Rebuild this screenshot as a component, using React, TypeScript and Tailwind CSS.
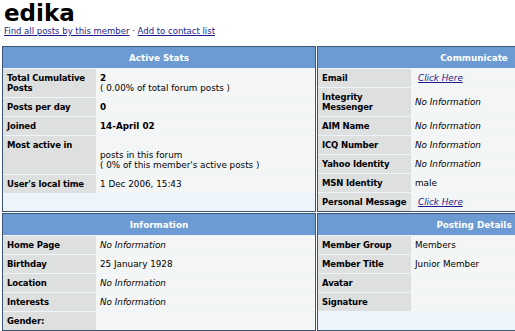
import React from "react";

type Row = { label: string[]; value: React.ReactNode };

const noInfo = <i>No Information</i>;
const clickHere = (
  <a href="#" className="ml-[3px] italic text-[#1c1c8c] underline">
    Click Here
  </a>
);

const activeStats: Row[] = [
  {
    label: ["Total Cumulative", "Posts"],
    value: (
      <>
        <b>2</b>
        <br />( 0.00% of total forum posts )
      </>
    ),
  },
  { label: ["Posts per day"], value: <b>0</b> },
  { label: ["Joined"], value: <b>14-April 02</b> },
  {
    label: ["Most active in"],
    value: (
      <>
        <br />
        posts in this forum
        <br />( 0% of this member's active posts )
      </>
    ),
  },
  { label: ["User's local time"], value: "1 Dec 2006, 15:43" },
];

const communicate: Row[] = [
  { label: ["Email"], value: clickHere },
  { label: ["Integrity", "Messenger"], value: noInfo },
  { label: ["AIM Name"], value: noInfo },
  { label: ["ICQ Number"], value: noInfo },
  { label: ["Yahoo Identity"], value: noInfo },
  { label: ["MSN Identity"], value: "male" },
  { label: ["Personal Message"], value: clickHere },
];

const information: Row[] = [
  { label: ["Home Page"], value: noInfo },
  { label: ["Birthday"], value: "25 January 1928" },
  { label: ["Location"], value: noInfo },
  { label: ["Interests"], value: noInfo },
  { label: ["Gender:"], value: "" },
];

const postingDetails: Row[] = [
  { label: ["Member Group"], value: "Members" },
  { label: ["Member Title"], value: "Junior Member" },
  { label: ["Avatar"], value: "" },
  { label: ["Signature"], value: "" },
];

function Box({ title, rows }: { title: string; rows: Row[] }) {
  return (
    <div className="flex w-[314px] flex-col border border-[#3d5574] bg-[#eef4fb]">
      <div className="flex h-[21px] items-center justify-center bg-[#6c9bd3] text-[8.8px] font-bold text-white">
        {title}
      </div>
      <div className="mt-px flex flex-col gap-px">
        {rows.map((r, i) => (
          <div key={i} className="flex">
            <div className="w-[93px] shrink-0 bg-[#dedfdf] px-[4px] py-[4px] text-[8.5px] font-bold tracking-[-0.15px] text-black">
              {r.label.map((l, j) => (
                <div key={j} className="whitespace-nowrap">
                  {l}
                </div>
              ))}
            </div>
            <div className="flex flex-1 items-center bg-[#f4f5f5] px-[4px] py-[4px] text-black">
              <div>{r.value}</div>
            </div>
          </div>
        ))}
      </div>
    </div>
  );
}

export default function App() {
  return (
    <div className="h-[331px] w-[515px] overflow-hidden bg-white font-['DejaVu_Sans',Verdana,sans-serif] text-[8.8px] leading-[10px]">
      <div className="w-[660px]">
        <h1 className="pl-[4px] pt-[1px] text-[23px] font-bold leading-[24px] text-black">edika</h1>
        <div className="pl-[4px] pt-px text-[8.5px] leading-[11px] text-[#1c1c8c]">
          <a href="#" className="underline">Find all posts by this member</a>
          <span className="text-black"> · </span>
          <a href="#" className="underline">Add to contact list</a>
        </div>
        <div className="mt-[9px] grid w-fit grid-cols-[314px_314px] gap-px pl-[2px]">
          <Box title="Active Stats" rows={activeStats} />
          <Box title="Communicate" rows={communicate} />
          <Box title="Information" rows={information} />
          <Box title="Posting Details" rows={postingDetails} />
        </div>
      </div>
    </div>
  );
}
